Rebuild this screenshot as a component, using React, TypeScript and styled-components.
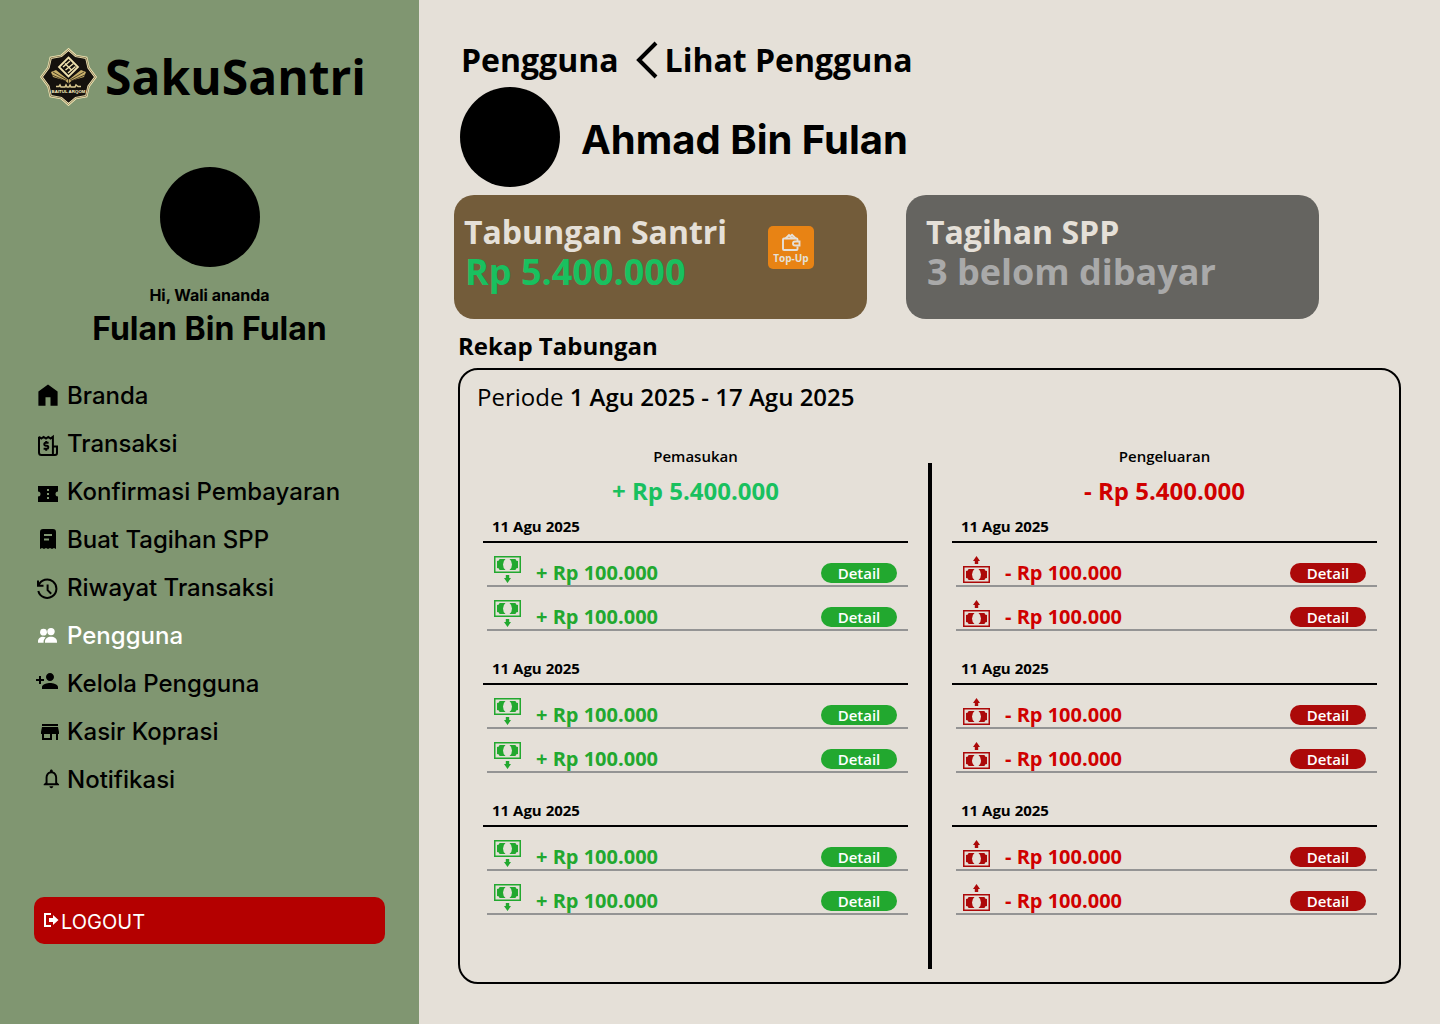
import React from "react";
import styled, { createGlobalStyle } from "styled-components";

const GlobalStyle = createGlobalStyle`
  *, *::before, *::after { box-sizing: border-box; }
  body { margin: 0; background: #e5e0d8; color: #000; }
  h1, h2, h3, p, ul { margin: 0; padding: 0; }
  ul { list-style: none; }
  button { font: inherit; border: 0; padding: 0; cursor: pointer; }
  a { color: inherit; text-decoration: none; }
`;

const sans = `"Open Sans", "Noto Sans", sans-serif`;
const inter = `Inter, "Liberation Sans", sans-serif`;

const Page = styled.div`
  display: flex;
  min-height: 100vh;
  font-family: ${sans};
`;

const Sidebar = styled.aside`
  flex: 0 0 419px;
  display: flex;
  flex-direction: column;
  padding: 48px 34px 80px;
  background: #809671;
  font-family: ${inter};
`;

const Brand = styled.a`
  display: flex;
  align-items: center;
  gap: 8px;
  height: 58px;
  padding-left: 6px;
  font: 700 48px/58px ${sans};
`;

const Avatar = styled.div`
  flex: none;
  width: 100px;
  height: 100px;
  border-radius: 50%;
  background: #000;
`;

const Profile = styled.section`
  display: flex;
  flex-direction: column;
  align-items: center;
  margin-top: 61px;
`;

const Greeting = styled.p`
  margin-top: 18px;
  font-size: 16px;
  font-weight: 700;
  line-height: 20px;
`;

const ProfileName = styled.p`
  margin-top: 4px;
  font-size: 32px;
  font-weight: 700;
  line-height: 40px;
`;

const Nav = styled.nav`
  margin-top: 23px;
`;

const NavLink = styled.a<{ $active?: boolean }>`
  display: flex;
  align-items: center;
  gap: 7px;
  height: 48px;
  padding-left: 2px;
  font-size: 24px;
  font-weight: 500;
  line-height: 30px;
  color: ${(p) => (p.$active ? "#fff" : "#000")};
`;

const Logout = styled.button`
  display: flex;
  align-items: center;
  gap: 1px;
  height: 47px;
  margin-top: auto;
  padding: 2px 0 0 9px;
  border-radius: 10px;
  background: #b40000;
  color: #fff;
  font-size: 20px;
  font-weight: 400;

  svg { margin-bottom: 3px; }
`;

const Main = styled.main`
  flex: 1;
  min-width: 0;
  display: flex;
  flex-direction: column;
  padding: 36px 39px 40px;
`;

const Crumbs = styled.nav`
  display: flex;
  align-items: center;
  gap: 7px;
  height: 48px;
  padding-left: 3px;
  font-size: 32px;
  font-weight: 700;
  line-height: 48px;

  svg { margin-left: 8px; }
`;

const Person = styled.header`
  display: flex;
  align-items: center;
  gap: 21px;
  margin-top: 3px;
  padding-left: 2px;
`;

const PersonName = styled.h1`
  padding-top: 6px;
  font: 700 40px/48px ${inter};
`;

const Cards = styled.section`
  display: grid;
  grid-template-columns: 1fr 1fr;
  gap: 39px;
  margin: 8px 82px 0 -4px;
`;

const Card = styled.article<{ $tone: string; $inset: number }>`
  display: flex;
  justify-content: space-between;
  height: 124px;
  padding: 17px 53px 0 ${(p) => p.$inset}px;
  border-radius: 20px;
  background: ${(p) => p.$tone};
`;

const CardTitle = styled.h2`
  font-size: 32px;
  font-weight: 700;
  line-height: 40px;
  color: #e5e0d8;
`;

const CardValue = styled.p<{ $color: string }>`
  padding-left: 1px;
  font-size: 36px;
  font-weight: 700;
  line-height: 40px;
  color: ${(p) => p.$color};
`;

const TopUp = styled.button`
  display: flex;
  flex-direction: column;
  align-items: center;
  width: 46px;
  height: 43px;
  margin-top: 14px;
  padding-top: 6px;
  border-radius: 5px;
  background: #e88314;
  color: #e5e0d8;
  font-size: 10px;
  font-weight: 700;
  line-height: 12px;
`;

const SectionTitle = styled.h2`
  margin-top: 11px;
  font-size: 24px;
  font-weight: 700;
  line-height: 32px;
`;

const Panel = styled.section`
  flex: 1;
  display: flex;
  flex-direction: column;
  margin-top: 6px;
  padding: 11px 22px 13px 23px;
  border: 2px solid #000;
  border-radius: 20px;
`;

const Period = styled.p`
  margin-left: -6px;
  font-size: 24px;
  line-height: 32px;

  strong { font-weight: 600; }
`;

const Columns = styled.div`
  flex: 1;
  display: grid;
  grid-template-columns: 1fr 4px 1fr;
  gap: 20px;
  margin-top: 33px;
`;

const Divider = styled.div`
  margin-top: 17px;
  background: #000;
`;

const ColumnLabel = styled.h3`
  font-size: 15px;
  font-weight: 600;
  line-height: 20px;
  text-align: center;
`;

const Total = styled.p<{ $color: string }>`
  margin-top: 7px;
  font-size: 24px;
  font-weight: 700;
  line-height: 36px;
  text-align: center;
  color: ${(p) => p.$color};
`;

const Day = styled.section`
  margin-bottom: 20px;
`;

const DayTitle = styled.h4`
  height: 34px;
  margin: 0;
  padding: 7px 9px 0;
  border-bottom: 2px solid #000;
  font-size: 15px;
  font-weight: 700;
  line-height: 20px;
`;

const Entry = styled.li<{ $color: string }>`
  display: flex;
  align-items: flex-end;
  height: 44px;
  margin-left: 4px;
  padding: 0 11px 2px 7px;
  border-bottom: 2px solid #949494;
  color: ${(p) => p.$color};
`;

const Amount = styled.span`
  flex: 1;
  margin-left: 15px;
  font-size: 20px;
  font-weight: 700;
  line-height: 20px;
`;

const DetailButton = styled.button<{ $color: string }>`
  width: 76px;
  height: 20px;
  border-radius: 10px;
  background: ${(p) => p.$color};
  color: #fff;
  font-size: 15px;
  font-weight: 600;
  line-height: 20px;
`;

const NavIcon = ({ viewBox = "0 0 24 24", children }: { viewBox?: string; children: React.ReactNode }) => (
  <svg width="24" height="24" viewBox={viewBox} fill="currentColor" aria-hidden="true">
    {children}
  </svg>
);

const navItems = [
  {
    label: "Branda",
    icon: <NavIcon><path d="M2.4 21.7V7.6L12 .5l9.6 7.1v14.1h-7.1v-8.4h-5v8.4z" /></NavIcon>,
  },
  {
    label: "Transaksi",
    icon: (
      <NavIcon>
        <path d="M3 4.8v15.7A2.5 2.5 0 0 0 5.500 23H19a2 2 0 0 0 2-2v-6.500h-4.200M16.900 23V4.800l-2.300 1.700L12.300 5 10 6.500 7.600 5 5.300 6.500 3 4.800M12.600 10.800H9.800a1.500 1.500 0 0 0 0 3h1a1.500 1.500 0 0 1 0 3H7.600M10.200 9v1.800m0 6v1.900" fill="none" stroke="currentColor" strokeWidth="2" />
      </NavIcon>
    ),
  },
  {
    label: "Konfirmasi Pembayaran",
    icon: (
      <NavIcon>
        <path fillRule="evenodd" d="M2 6h20v5.500a2.500 2.500 0 0 0 0 5V22H2v-5.500a2.500 2.500 0 0 0 0-5zm9 3v2h2V9zm0 4v2h2v-2zm0 4v2h2v-2z" />
      </NavIcon>
    ),
  },
  {
    label: "Buat Tagihan SPP",
    icon: (
      <NavIcon>
        <path fillRule="evenodd" d="M7 1h10a3 3 0 0 1 3 3v17l-2-1-2 1-2-1-2 1-2-1-2 1-2-1-2 1V4a3 3 0 0 1 3-3zm1 5v2h8V6zm0 4.500v2h5v-2z" />
      </NavIcon>
    ),
  },
  {
    label: "Riwayat Transaksi",
    icon: (
      <NavIcon>
        <path d="M2 4.500v5.300h5.500M2.600 9.400A9.200 9.200 0 1 1 2.300 15M11.600 8.600v5.600l3.600 3.500" fill="none" stroke="currentColor" strokeWidth="2" />
      </NavIcon>
    ),
  },
  {
    label: "Pengguna",
    active: true,
    icon: (
      <NavIcon>
        <circle cx="7.500" cy="8.200" r="3.400" />
        <circle cx="15" cy="7.600" r="3.700" />
        <path d="M2 18.700v-1.200c0-2.900 2.200-4.700 5-4.700 1 0 2 .2 2.700.6-1.400 1.100-2.100 2.700-2.100 4.300v1zM9 18.700v-1c0-3 2.800-4.900 6-4.900s6 1.900 6 4.900v1z" />
      </NavIcon>
    ),
  },
  {
    label: "Kelola Pengguna",
    icon: (
      <NavIcon viewBox="1 3 24 24">
        <path d="M15 12c2.210 0 4-1.790 4-4s-1.790-4-4-4-4 1.790-4 4 1.790 4 4 4zm-9-2V7H4v3H1v2h3v3h2v-3h3v-2H6zm9 4c-2.670 0-8 1.340-8 4v2h16v-2c0-2.660-5.330-4-8-4z" />
      </NavIcon>
    ),
  },
  {
    label: "Kasir Koprasi",
    icon: (
      <NavIcon viewBox="-2 0 24 24">
        <path d="M20 4H4v2h16V4zm1 10v-2l-1-5H4l-1 5v2h1v6h10v-6h4v6h2v-6h1zm-9 4H6v-4h6v4z" />
      </NavIcon>
    ),
  },
  {
    label: "Notifikasi",
    icon: (
      <NavIcon viewBox="-4 1 25 25">
        <path d="M12 22c1.100 0 2-.9 2-2h-4c0 1.100.9 2 2 2zm6-6v-5c0-3.070-1.630-5.640-4.500-6.320V4c0-.83-.67-1.500-1.500-1.500s-1.500.67-1.500 1.500v.68C7.640 5.360 6 7.920 6 11v5l-2 2v1h16v-1l-2-2zm-2 1H8v-6c0-2.480 1.510-4.500 4-4.500s4 2.020 4 4.500v6z" />
      </NavIcon>
    ),
  },
];

const starPath =
  "M28.500 1.500l7.300 6.500 10.500 1.800 2.300 9.900L55.500 29l-6.900 9.300-2.300 9.900-10.500 1.800-7.300 6.500-7.300-6.500-10.500-1.800-2.300-9.900L1.500 29l6.900-9.300 2.300-9.900 10.500-1.800z";

const Logo = () => (
  <svg width="57" height="58" viewBox="0 0 57 58" aria-hidden="true">
    <path d={starPath} fill="#15110d" stroke="#f6eab8" strokeWidth="2.400" />
    <path d={starPath} fill="none" stroke="#4a3a1c" strokeWidth=".6" />
    <g fill="none" stroke="#f0e2ae">
      <path d="M28.500 9.500l9.500 9.500-9.500 9.500-9.500-9.500z" strokeWidth="1.800" />
      <path d="M23 19l7-6m-4.500 9 8-6.500M28 25l7.500-6.500M25 15.500l7 7" strokeWidth="1.400" />
    </g>
    <path d="M11 24l5-2 12.500 10L41 22l5 2-2 5-12 3.500-3.500 3-3.500-3L13 29z" fill="#c9b06a" />
    <path d="M13 24l14 8M12 27l14 6m18-9l-14 8m15-5l-14 6M28.500 32v4" stroke="#2a2215" strokeWidth=".8" />
    <path d="M16 38.500h3l1-1.500 1 2h4l1-2 1 2h2l1-2 1 2h4l1-2 2 1.500h3" fill="none" stroke="#d9c88f" strokeWidth="1.500" />
    <text x="28.500" y="45" textAnchor="middle" fontFamily="Liberation Sans, sans-serif" fontWeight="700" fontSize="4.400" fill="#fff3c4">
      BAITUL ARQOM
    </text>
  </svg>
);

const LogoutIcon = () => (
  <svg width="17" height="17" viewBox="0 0 17 17" aria-hidden="true">
    <path d="M8 2H2v12h6" fill="none" stroke="currentColor" strokeWidth="2" />
    <path d="M6 6h4V3l5.500 5-5.500 5v-3H6z" fill="currentColor" />
  </svg>
);

const Chevron = () => (
  <svg width="24" height="40" viewBox="0 0 24 40" fill="none" stroke="#000" strokeWidth="4" aria-hidden="true">
    <path d="M22 3L5 20l17 17" />
  </svg>
);

const WalletIcon = () => (
  <svg width="20" height="20" viewBox="0 0 20 20" fill="none" stroke="currentColor" strokeWidth="1.900" aria-hidden="true">
    <path d="M16.500 9V7.500a1 1 0 0 0-1-1H3a1 1 0 0 0-1 1V17a1 1 0 0 0 1 1h12.500a1 1 0 0 0 1-1v-2.500" />
    <path d="M14 9.500h4.500v4H14a2 2 0 0 1 0-4zM4.500 6.500L8 3l3.500 3.500M9.500 4l1.500-1.200 3.800 3.700" />
  </svg>
);

const BanknoteIcon = ({ outgoing }: { outgoing: boolean }) => (
  <svg width="27" height="27" viewBox="0 0 27 27" fill={outgoing ? "#ac0909" : "currentColor"} aria-hidden="true">
    <g transform={outgoing ? "translate(0 10)" : undefined}>
      <path fillRule="evenodd" d="M0 0h27v17H0zm1.500 1.500v14h24v-14z" />
      <path d="M5.500 3h6Q9 5 9 8.500t2.500 5.500h-6q0-2-2.500-2V5q2.500 0 2.500-2zM21.500 3h-6Q18 5 18 8.500T15.500 14h6q0-2 2.500-2V5q-2.500 0-2.500-2z" />
    </g>
    <path d={outgoing ? "M13.500 0l3.500 5h-1.800v3h-3.400V5H10z" : "M13.500 27l3.500-5h-1.800v-3h-3.400v3H10z"} />
  </svg>
);

const days = [
  { date: "11 Agu 2025", amounts: ["100.000", "100.000"] },
  { date: "11 Agu 2025", amounts: ["100.000", "100.000"] },
  { date: "11 Agu 2025", amounts: ["100.000", "100.000"] },
];

interface LedgerProps {
  label: string;
  sign: string;
  totalColor: string;
  textColor: string;
  buttonColor: string;
  outgoing?: boolean;
}

const Ledger = ({ label, sign, totalColor, textColor, buttonColor, outgoing = false }: LedgerProps) => (
  <div>
    <ColumnLabel>{label}</ColumnLabel>
    <Total $color={totalColor}>{sign} Rp 5.400.000</Total>
    {days.map((day, i) => (
      <Day key={i}>
        <DayTitle>{day.date}</DayTitle>
        <ul>
          {day.amounts.map((amount, j) => (
            <Entry key={j} $color={textColor}>
              <BanknoteIcon outgoing={outgoing} />
              <Amount>{sign} Rp {amount}</Amount>
              <DetailButton type="button" $color={buttonColor}>Detail</DetailButton>
            </Entry>
          ))}
        </ul>
      </Day>
    ))}
  </div>
);

export default function App() {
  return (
    <Page>
      <GlobalStyle />
      <Sidebar>
        <Brand href="#"><Logo />SakuSantri</Brand>
        <Profile>
          <Avatar />
          <Greeting>Hi, Wali ananda</Greeting>
          <ProfileName>Fulan Bin Fulan</ProfileName>
        </Profile>
        <Nav>
          <ul>
            {navItems.map((item) => (
              <li key={item.label}>
                <NavLink href="#" $active={item.active}>{item.icon}<span>{item.label}</span></NavLink>
              </li>
            ))}
          </ul>
        </Nav>
        <Logout type="button"><LogoutIcon />LOGOUT</Logout>
      </Sidebar>
      <Main>
        <Crumbs>
          <a href="#">Pengguna</a>
          <Chevron />
          <span>Lihat Pengguna</span>
        </Crumbs>
        <Person>
          <Avatar />
          <PersonName>Ahmad Bin Fulan</PersonName>
        </Person>
        <Cards>
          <Card $tone="#735c3a" $inset={10}>
            <div>
              <CardTitle>Tabungan Santri</CardTitle>
              <CardValue $color="#19c05f">Rp 5.400.000</CardValue>
            </div>
            <TopUp type="button"><WalletIcon />Top-Up</TopUp>
          </Card>
          <Card $tone="#656460" $inset={20}>
            <div>
              <CardTitle>Tagihan SPP</CardTitle>
              <CardValue $color="#a9a9a9">3 belom dibayar</CardValue>
            </div>
          </Card>
        </Cards>
        <SectionTitle>Rekap Tabungan</SectionTitle>
        <Panel>
          <Period>Periode <strong>1 Agu 2025 - 17 Agu 2025</strong></Period>
          <Columns>
            <Ledger label="Pemasukan" sign="+" totalColor="#19c05f" textColor="#22a82f" buttonColor="#22a82f" />
            <Divider />
            <Ledger label="Pengeluaran" sign="-" totalColor="#d00000" textColor="#d00000" buttonColor="#ac0909" outgoing />
          </Columns>
        </Panel>
      </Main>
    </Page>
  );
}
